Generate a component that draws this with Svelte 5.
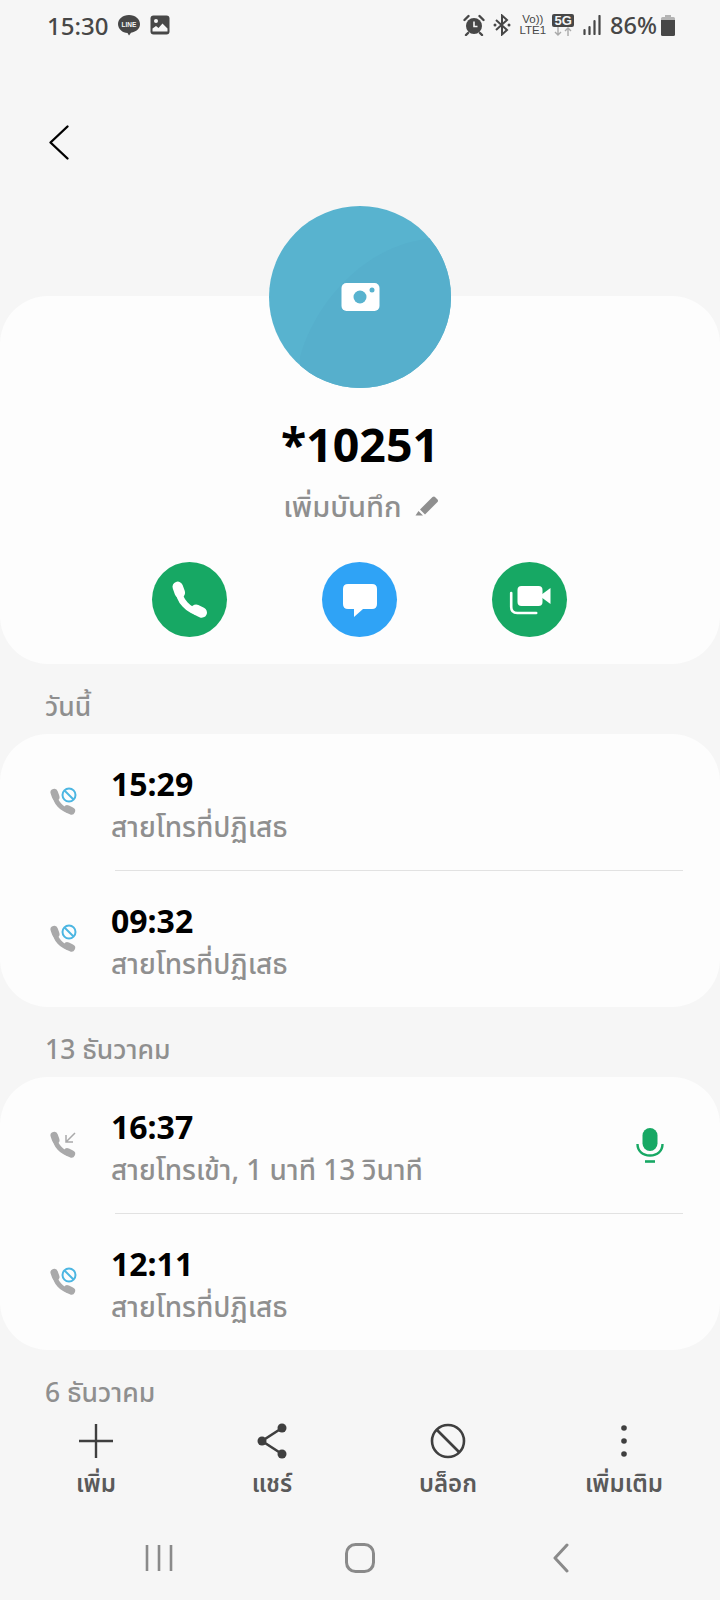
<script>
	const actions = [
		{ label: "เพิ่ม", icon: "plus" },
		{ label: "แชร์", icon: "share" },
		{ label: "บล็อก", icon: "block" },
		{ label: "เพิ่มเติม", icon: "more" }
	];

	const sections = [
		{
			title: "วันนี้",
			rows: [
				{ time: "15:29", note: "สายโทรที่ปฏิเสธ", kind: "rejected" },
				{ time: "09:32", note: "สายโทรที่ปฏิเสธ", kind: "rejected" }
			]
		},
		{
			title: "13 ธันวาคม",
			rows: [
				{ time: "16:37", note: "สายโทรเข้า, 1 นาที 13 วินาที", kind: "incoming", mic: true },
				{ time: "12:11", note: "สายโทรที่ปฏิเสธ", kind: "rejected" }
			]
		}
	];
</script>

{#snippet handset(color)}
	<g fill="none" stroke={color} stroke-linecap="round">
		<path d="M5.500 5.500C5.500 12 11 18.500 18 19" stroke-width="3.800" />
		<path d="M5 4.500l1.200 3.400" stroke-width="6" />
		<path d="M15.500 17.600l3.200 1.500" stroke-width="6" />
	</g>
{/snippet}

<div class="screen">
	<header class="status">
		<div class="status-left">
			<span class="clock">15:30</span>
			<svg width="24" height="22" viewBox="0 0 24 22">
				<path d="M12 1C5.600 1 1 5 1 10s4.600 8.800 9.500 9l1.500 2.500 2-2.800C19.500 17.800 23 14.500 23 10 23 5 18.400 1 12 1z" fill="#474747" />
				<text x="12" y="12.500" text-anchor="middle" class="line-word">LINE</text>
			</svg>
			<svg width="20" height="20" viewBox="0 0 20 20">
				<rect x="0.500" y="0.500" width="19" height="19" rx="3" fill="#474747" />
				<circle cx="6" cy="6" r="2" fill="#f6f6f6" />
				<path d="M2.500 16.500v-3l3.500-2.500 2.500 2 4-4.500 5 5v3z" fill="#f6f6f6" />
			</svg>
		</div>
		<div class="status-right">
			<svg width="22" height="22" viewBox="0 0 22 22">
				<circle cx="11" cy="12" r="8" fill="#474747" />
				<path d="M11 7.500v5h3.500" fill="none" stroke="#f6f6f6" stroke-width="1.600" />
				<path d="M1.500 6l4-4M20.500 6l-4-4M5 19l-2 2M17 19l2 2" stroke="#474747" stroke-width="2.400" stroke-linecap="round" />
			</svg>
			<svg class="bt" width="18" height="22" viewBox="0 0 18 22">
				<path d="M3 6l11 10-5 4.500V1.500L14 6 3 16" fill="none" stroke="#474747" stroke-width="2" />
				<circle cx="2" cy="11" r="1.500" fill="#474747" />
				<circle cx="16" cy="11" r="1.500" fill="#474747" />
			</svg>
			<div class="volte">
				<span>Vo))</span>
				<span>LTE1</span>
			</div>
			<div class="five-g">
				<span class="tag">5G</span>
				<svg width="22" height="9" viewBox="0 0 22 9">
					<path d="M6 0v8M3 5l3 3 3-3" fill="none" stroke="#a9a9a9" stroke-width="1.400" />
					<path d="M16 9V1M13 4l3-3 3 3" fill="none" stroke="#a9a9a9" stroke-width="1.400" />
				</svg>
			</div>
			<svg class="signal" width="19" height="20" viewBox="0 0 19 20">
				<path d="M1.500 19v-4M6.500 19v-7M11.500 19V6M16.500 19V1" stroke="#474747" stroke-width="2.200" stroke-linecap="round" />
			</svg>
			<span class="battery-text">86%</span>
			<svg width="14" height="21" viewBox="0 0 14 21">
				<path d="M4 0h6v2h2.500q1.500 0 1.500 1.500V6H0V3.500Q0 2 1.500 2H4z" fill="#b4b4b4" />
				<path d="M0 5h14v14.500q0 1.500-1.500 1.500h-11Q0 21 0 19.500z" fill="#474747" />
			</svg>
		</div>
	</header>

	<main class="scroller">
		<div class="top">
			<svg width="24" height="38" viewBox="0 0 24 38">
				<path d="M20.500 3.500L3.500 19.500l17 16" fill="none" stroke="#000" stroke-width="2.400" stroke-linecap="round" stroke-linejoin="round" />
			</svg>
		</div>

		<div class="profile">
			<div class="avatar">
				<svg width="182" height="182" viewBox="0 0 182 182" class="avatar-art">
					<path d="M31 151C45 100 90 45 151 34L190 26V190H31z" fill="#56afcc" />
					<rect x="72.500" y="77" width="38" height="28" rx="5" fill="#fff" />
					<circle cx="91" cy="91" r="6.500" fill="#58b3cf" />
					<circle cx="103" cy="84" r="2.500" fill="#58b3cf" />
				</svg>
			</div>
			<h1>*10251</h1>
			<div class="memo">
				<span>เพิ่มบันทึก</span>
				<svg width="25" height="25" viewBox="0 0 25 25">
					<path d="M6 15.500L18.500 3q1.500-1 2.500 0l2.500 2.500q1 1.200 0 2.500L11 20.500z" fill="#8f8f8f" />
					<path d="M4.500 17l4.500 4.500H1.500z" fill="#8f8f8f" />
				</svg>
			</div>
			<div class="contact-buttons">
				<div class="round green">
					<svg width="42" height="42" viewBox="0 0 24 24">{@render handset("#fff")}</svg>
				</div>
				<div class="round blue">
					<svg width="38" height="38" viewBox="0 0 38 38">
						<path d="M7 3h24q5 0 5 5v15q0 5-5 5H22l-9 8v-8H7q-5 0-5-5V8q0-5 5-5z" fill="#fff" />
					</svg>
				</div>
				<div class="round green">
					<svg width="44" height="36" viewBox="0 0 44 36">
						<rect x="9.500" y="4" width="25" height="20" rx="4" fill="#fff" />
						<path d="M33 13l9.500-7v16L33 15z" fill="#fff" />
						<path d="M3.200 11v14q0 6 6 6h19" fill="none" stroke="#fff" stroke-width="2.600" stroke-linecap="round" />
					</svg>
				</div>
			</div>
		</div>

		{#each sections as section}
			<h2>{section.title}</h2>
			<section class="card">
				{#each section.rows as row}
					<div class="row">
						<svg class="call-icon" width="32" height="32" viewBox="0 0 32 32">
							<g transform="translate(-1 1) scale(1.250)">{@render handset("#a9a9aa")}</g>
							{#if row.kind === "rejected"}
								<circle cx="20" cy="9" r="6.500" fill="#fdfdfd" stroke="#4cb6e2" stroke-width="2" />
								<path d="M15.500 4.500l9 9" stroke="#4cb6e2" stroke-width="2" />
							{:else}
								<path d="M26 4l-9 9M17 6v7h7" fill="none" stroke="#a9a9aa" stroke-width="1.500" />
							{/if}
						</svg>
						<div class="row-text">
							<div class="time">{row.time}</div>
							<div class="note">{row.note}</div>
						</div>
						{#if row.mic}
							<svg class="mic" width="28" height="36" viewBox="0 0 28 36">
								<rect x="6.500" y="1" width="15" height="23" rx="7.500" fill="#17a864" />
								<path d="M1.500 17c0 7 5 11.500 12.500 11.500S26.500 24 26.500 17" fill="none" stroke="#17a864" stroke-width="2.400" />
								<path d="M9 34.500h10" stroke="#17a864" stroke-width="2.600" />
							</svg>
						{/if}
					</div>
				{/each}
			</section>
		{/each}

		<h2>6 ธันวาคม</h2>
	</main>

	<div class="toolbar">
		{#each actions as action}
			<div class="action">
				<svg width="38" height="38" viewBox="0 0 38 38">
					{#if action.icon === "plus"}
						<path d="M19 2v34M2 19h34" stroke="#3f3f3f" stroke-width="2.400" />
					{:else if action.icon === "share"}
						<path d="M29 6L9 19l20 13" fill="none" stroke="#3f3f3f" stroke-width="2.600" />
						<circle cx="29" cy="6" r="4.500" fill="#3f3f3f" />
						<circle cx="9" cy="19" r="4.500" fill="#3f3f3f" />
						<circle cx="29" cy="32" r="4.500" fill="#3f3f3f" />
					{:else if action.icon === "block"}
						<circle cx="19" cy="19" r="16" fill="none" stroke="#3f3f3f" stroke-width="2.600" />
						<path d="M8 8l22 22" stroke="#3f3f3f" stroke-width="2.600" />
					{:else}
						<circle cx="19" cy="6" r="2.800" fill="#3f3f3f" />
						<circle cx="19" cy="19" r="2.800" fill="#3f3f3f" />
						<circle cx="19" cy="32" r="2.800" fill="#3f3f3f" />
					{/if}
				</svg>
				<span>{action.label}</span>
			</div>
		{/each}
	</div>

	<nav class="navbar">
		<svg width="28" height="28" viewBox="0 0 28 28">
			<path d="M2 1v26M14 1v26M26 1v26" stroke="#8a8a8a" stroke-width="2.600" />
		</svg>
		<svg width="30" height="30" viewBox="0 0 30 30">
			<rect x="1.500" y="1.500" width="27" height="27" rx="9" fill="none" stroke="#8a8a8a" stroke-width="3" />
		</svg>
		<svg width="18" height="30" viewBox="0 0 18 30">
			<path d="M15 2L3 15l12 13" fill="none" stroke="#8a8a8a" stroke-width="3" stroke-linecap="round" stroke-linejoin="round" />
		</svg>
	</nav>
</div>

<style>
	:global(body) {
		margin: 0;
		background: #f6f6f6;
	}

	.screen {
		width: 720px;
		height: 1600px;
		display: flex;
		flex-direction: column;
		overflow: hidden;
		background: #f6f6f6;
		font-family: "Noto Sans", "Noto Sans Thai", "Lato", "DejaVu Sans", sans-serif;
	}

	/* status bar */
	.status {
		height: 52px;
		flex: none;
		display: flex;
		align-items: center;
		justify-content: space-between;
		padding: 0 45px 2px 47px;
		box-sizing: border-box;
		color: #474747;
	}

	.status-left,
	.status-right {
		display: flex;
		align-items: center;
	}

	.status-left {
		gap: 9px;
	}

	.clock {
		font-size: 24px;
		font-weight: 500;
	}

	.line-word {
		font-size: 6.500px;
		font-weight: 700;
		fill: #f6f6f6;
		font-family: "Liberation Sans", sans-serif;
	}

	.status-right {
		gap: 8px;
	}

	.volte {
		display: flex;
		flex-direction: column;
		align-items: center;
		font: 11.500px/11px "Liberation Sans", sans-serif;
		color: #474747;
	}

	.five-g {
		display: flex;
		flex-direction: column;
		align-items: center;
		margin-left: -2px;
	}

	.tag {
		background: #474747;
		color: #f6f6f6;
		font: 700 13px/13px "Liberation Sans", sans-serif;
		padding: 0 2px;
		border-radius: 2px;
	}

	.signal {
		margin-left: 1px;
	}

	.battery-text {
		font-size: 23.500px;
		font-weight: 500;
		margin-left: 0;
		margin-right: -4px;
	}

	/* scroll area */
	.scroller {
		flex: 1;
		min-height: 0;
		overflow: hidden;
	}

	.top {
		height: 154px;
		padding: 71px 0 0 47px;
		box-sizing: border-box;
	}

	.profile {
		margin-top: 90px;
		height: 368px;
		background: #fdfdfd;
		border-radius: 48px;
		display: flex;
		flex-direction: column;
		align-items: center;
	}

	.avatar {
		width: 182px;
		height: 182px;
		margin-top: -90px;
		border-radius: 50%;
		background: #58b3cf;
		overflow: hidden;
		flex: none;
	}

	.avatar-art {
		display: block;
	}

	h1 {
		margin: 25px 0 0;
		font-size: 46.500px;
		line-height: 62px;
		font-weight: 700;
		color: #000;
	}

	.memo {
		display: flex;
		align-items: center;
		gap: 12px;
		margin-top: 11px;
		margin-left: 2px;
		font-size: 29px;
		font-weight: 500;
		line-height: 40px;
		color: #8f8f8f;
	}

	.contact-buttons {
		display: flex;
		gap: 95px;
		margin-top: 36px;
		margin-left: -1px;
	}

	.round {
		width: 75px;
		height: 75px;
		border-radius: 50%;
		display: flex;
		align-items: center;
		justify-content: center;
	}

	.green {
		background: #17a864;
	}

	.blue {
		background: #2fa3f6;
	}

	h2 {
		margin: 0;
		height: 70px;
		padding-left: 45px;
		font-size: 26.500px;
		font-weight: 500;
		line-height: 84px;
		color: #8f8f8f;
		box-sizing: border-box;
	}

	.card {
		background: #fdfdfd;
		border-radius: 48px;
	}

	.row {
		height: 136px;
		position: relative;
		display: flex;
		align-items: center;
		padding: 0 56px 0 49px;
		box-sizing: border-box;
	}

	.row + .row {
		height: 137px;
		border-top: 1px solid #e2e2e2;
		border-image: linear-gradient(to right, transparent 116px, #e2e2e2 116px, #e2e2e2 682px, transparent 682px) 1;
	}

	.call-icon {
		margin-right: 30px;
		flex: none;
	}

	.row-text {
		flex: 1;
		margin-top: 6px;
	}

	.time {
		font-size: 32px;
		line-height: 42px;
		font-weight: 700;
		color: #000;
	}

	.note {
		font-size: 28px;
		font-weight: 500;
		line-height: 42px;
		color: #8f8f8f;
	}

	.mic {
		flex: none;
	}

	/* bottom bar */
	.toolbar {
		flex: none;
		height: 105px;
		display: grid;
		grid-template-columns: repeat(4, 1fr);
		padding: 0 8px;
		box-sizing: border-box;
	}

	.action {
		display: flex;
		flex-direction: column;
		align-items: center;
		padding-top: 11px;
		gap: 5px;
		font-size: 24px;
		line-height: 36px;
		font-weight: 600;
		color: #5a5a5a;
	}

	.navbar {
		flex: none;
		height: 84px;
		display: grid;
		grid-template-columns: repeat(3, 1fr);
		justify-items: center;
		align-items: center;
		padding: 0 58px;
	}
</style>
